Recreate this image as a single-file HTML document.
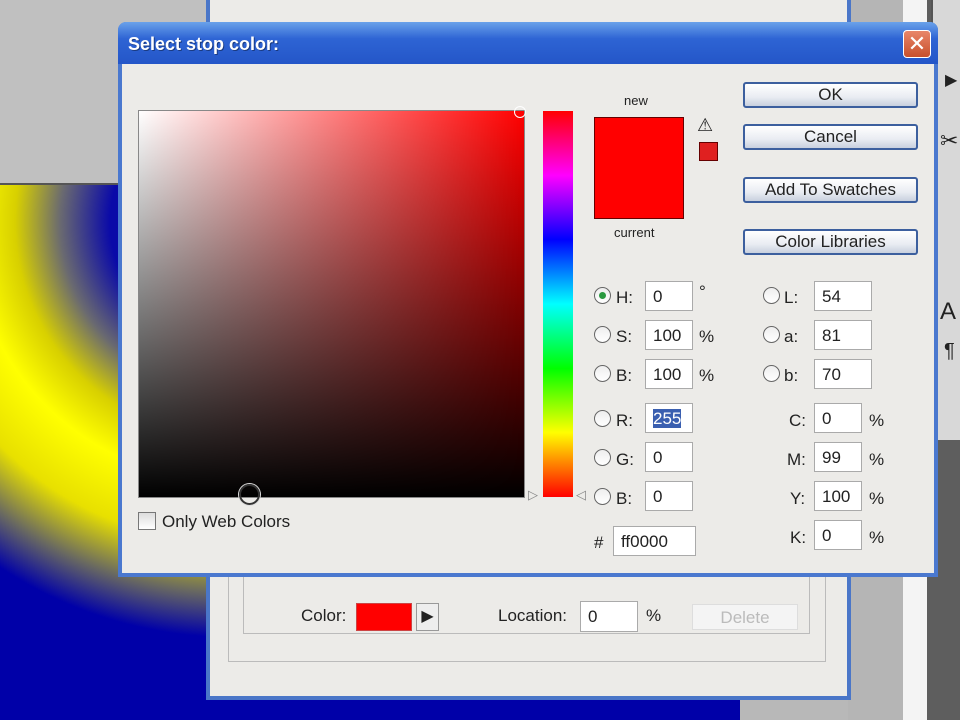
<!DOCTYPE html>
<html><head><style>
*{margin:0;padding:0;box-sizing:border-box}
body{width:960px;height:720px;overflow:hidden;position:relative;background:#c0c0c0;font-family:"Liberation Sans","DejaVu Sans",sans-serif;font-size:17px;color:#222}
.a{position:absolute}
.canvas{left:0;top:183px;width:760px;height:537px;background:radial-gradient(circle at 230px 37px,#0000b0 0px,#0a0aa8 120px,#6a6a70 170px,#d8d000 215px,#ffff00 260px,#e8e000 320px,#6a6a60 370px,#0000a8 415px);border-top:2px solid #555}
.inp{position:absolute;background:#fff;border:1px solid #aaa;height:30px;padding:5px 7px;font-size:17px}
.lbl{position:absolute;font-size:17px}
.rad{position:absolute;width:17px;height:17px;border:1px solid #666;border-radius:50%;background:linear-gradient(#eee,#fff)}
.btn{position:absolute;left:743px;width:175px;height:26px;border:2px solid #3c5f9e;border-radius:3px;background:linear-gradient(#fff,#e9ecf2 60%,#c8d0de);text-align:center;font-size:17px;line-height:22px}
</style></head><body>
<div class="a canvas"></div>
<div class="a" style="left:740px;top:575px;width:170px;height:145px;background:#b8b8b8"></div>
<div class="a" style="left:848px;top:0;width:58px;height:720px;background:#b5b5b5"></div>
<div class="a" style="left:903px;top:0;width:26px;height:720px;background:#f4f4f4"></div>
<div class="a" style="left:927px;top:0;width:33px;height:720px;background:#5e5e5e"></div>
<div class="a" style="left:931px;top:0;width:29px;height:440px;background:#d8d8d8;border-left:2px solid #555"></div>
<div class="lbl" style="left:940px;top:298px;font-size:24px">A</div>
<div class="lbl" style="left:944px;top:340px;font-size:20px">¶</div>
<div class="lbl" style="left:940px;top:128px;font-size:22px">✂</div>
<div class="lbl" style="left:945px;top:70px;font-size:16px">▶</div>
<div class="a" style="left:206px;top:-5px;width:645px;height:705px;background:#ecebe8;border:4px solid #4a76c8"></div>
<div class="a" style="left:228px;top:560px;width:598px;height:102px;border:1px solid #bbb;border-top:none"></div>
<div class="a" style="left:243px;top:560px;width:567px;height:74px;border:1px solid #bbb;border-top:none"></div>
<div class="lbl" style="left:301px;top:606px">Color:</div>
<div class="a" style="left:356px;top:603px;width:56px;height:28px;background:#f00;border:1px solid #c44"></div>
<div class="a" style="left:416px;top:603px;width:23px;height:28px;background:#eee;border:1px solid #999;font-size:16px;text-align:center;line-height:26px">▶</div>
<div class="lbl" style="left:498px;top:606px">Location:</div>
<div class="inp" style="left:580px;top:601px;width:58px;height:31px">0</div>
<div class="lbl" style="left:646px;top:606px">%</div>
<div class="a" style="left:692px;top:604px;width:106px;height:26px;border:1px solid #ddd;background:#f4f4f4;color:#bbb;text-align:center;line-height:26px">Delete</div>
<div class="a" style="left:118px;top:22px;width:820px;height:555px;background:#4a78cf;border-radius:8px 8px 0 0"></div>
<div class="a" style="left:118px;top:22px;width:820px;height:42px;border-radius:8px 8px 0 0;background:linear-gradient(#6aa2ea,#2e64d4 40%,#2456c8)"></div>
<div class="lbl" style="left:128px;top:34px;color:#fff;font-weight:bold;font-size:18px;text-shadow:1px 1px #1a3a80">Select stop color:</div>
<div class="a" style="left:903px;top:30px;width:28px;height:28px;border:1px solid #fff;border-radius:4px;background:linear-gradient(#e8866a,#c8502c);color:#fff;font-size:22px;text-align:center;line-height:26px;font-weight:bold">✕</div>
<div class="a" style="left:122px;top:64px;width:812px;height:509px;background:#ecebe8"></div>
<div class="a" style="left:138px;top:110px;width:387px;height:388px;border:1px solid #888;background:linear-gradient(to bottom,rgba(0,0,0,0),#000),linear-gradient(to right,#fff,#f00)"></div>
<div class="a" style="left:514px;top:106px;width:12px;height:12px;border:1px solid #fff;border-radius:50%"></div>
<div class="a" style="left:239px;top:484px;width:21px;height:21px;border:2px solid #333;border-radius:50%;box-shadow:0 0 0 1px #ddd"></div>
<div class="a" style="left:543px;top:111px;width:30px;height:386px;background:linear-gradient(#f00,#f0f 16.7%,#00f 33.3%,#0ff 50%,#0f0 66.7%,#ff0 83.3%,#f00)"></div>
<div class="lbl" style="left:528px;top:487px;font-size:13px;color:#888">▷</div>
<div class="lbl" style="left:576px;top:487px;font-size:13px;color:#888">◁</div>
<div class="a" style="left:138px;top:512px;width:18px;height:18px;border:1px solid #777;background:linear-gradient(#ddd,#fff)"></div>
<div class="lbl" style="left:162px;top:512px">Only Web Colors</div>
<div class="lbl" style="left:624px;top:93px;font-size:13px">new</div>
<div class="a" style="left:594px;top:117px;width:90px;height:102px;background:#f00;border:1px solid #600"></div>
<div class="lbl" style="left:614px;top:225px;font-size:13px">current</div>
<div class="lbl" style="left:697px;top:115px;font-size:18px">⚠</div>
<div class="a" style="left:699px;top:142px;width:19px;height:19px;background:#e02020;border:1px solid #600"></div>
<div class="btn" style="top:82px">OK</div>
<div class="btn" style="top:124px">Cancel</div>
<div class="btn" style="top:177px">Add To Swatches</div>
<div class="btn" style="top:229px">Color Libraries</div>
<div class="rad" style="left:594px;top:287px"><div style="margin:4px;width:7px;height:7px;border-radius:50%;background:#2a9a40"></div></div>
<div class="lbl" style="left:616px;top:288px">H:</div><div class="inp" style="left:645px;top:281px;width:48px">0</div><div class="lbl" style="left:699px;top:282px">°</div>
<div class="rad" style="left:594px;top:326px"></div><div class="lbl" style="left:616px;top:327px">S:</div><div class="inp" style="left:645px;top:320px;width:48px">100</div><div class="lbl" style="left:699px;top:327px">%</div>
<div class="rad" style="left:594px;top:365px"></div><div class="lbl" style="left:616px;top:366px">B:</div><div class="inp" style="left:645px;top:359px;width:48px">100</div><div class="lbl" style="left:699px;top:366px">%</div>
<div class="rad" style="left:594px;top:410px"></div><div class="lbl" style="left:616px;top:411px">R:</div><div class="inp" style="left:645px;top:403px;width:48px"><span style="background:#3a5fb0;color:#fff">255</span></div>
<div class="rad" style="left:594px;top:449px"></div><div class="lbl" style="left:616px;top:450px">G:</div><div class="inp" style="left:645px;top:442px;width:48px">0</div>
<div class="rad" style="left:594px;top:488px"></div><div class="lbl" style="left:616px;top:489px">B:</div><div class="inp" style="left:645px;top:481px;width:48px">0</div>
<div class="lbl" style="left:594px;top:533px">#</div><div class="inp" style="left:613px;top:526px;width:83px">ff0000</div>
<div class="rad" style="left:763px;top:287px"></div><div class="lbl" style="left:784px;top:288px">L:</div><div class="inp" style="left:814px;top:281px;width:58px">54</div>
<div class="rad" style="left:763px;top:326px"></div><div class="lbl" style="left:784px;top:327px">a:</div><div class="inp" style="left:814px;top:320px;width:58px">81</div>
<div class="rad" style="left:763px;top:365px"></div><div class="lbl" style="left:784px;top:366px">b:</div><div class="inp" style="left:814px;top:359px;width:58px">70</div>
<div class="lbl" style="left:789px;top:411px">C:</div><div class="inp" style="left:814px;top:403px;width:48px">0</div><div class="lbl" style="left:869px;top:411px">%</div>
<div class="lbl" style="left:787px;top:450px">M:</div><div class="inp" style="left:814px;top:442px;width:48px">99</div><div class="lbl" style="left:869px;top:450px">%</div>
<div class="lbl" style="left:790px;top:489px">Y:</div><div class="inp" style="left:814px;top:481px;width:48px">100</div><div class="lbl" style="left:869px;top:489px">%</div>
<div class="lbl" style="left:790px;top:528px">K:</div><div class="inp" style="left:814px;top:520px;width:48px">0</div><div class="lbl" style="left:869px;top:528px">%</div>
</body></html>
